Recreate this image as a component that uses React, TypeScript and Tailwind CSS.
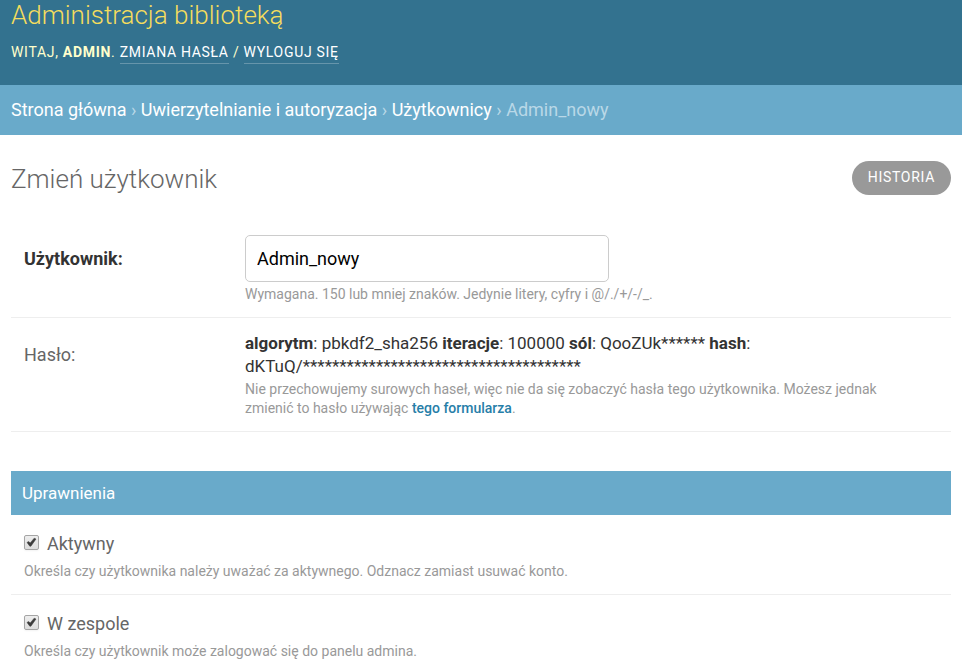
import { useState } from "react";

const linkClass = "border-b border-white/25 pb-[3px] text-white hover:border-transparent";

type CheckRowProps = { id: string; label: string; help: string };

function CheckRow({ id, label, help }: CheckRowProps) {
  const [checked, setChecked] = useState(true);
  return (
    <div className="border-b border-[#eee] px-[13px] pt-[15px] pb-[13px]">
      <div className="flex items-center gap-2">
        <span className="relative mb-[3px] flex h-[15px] w-[15px]">
          <input
            id={id}
            type="checkbox"
            checked={checked}
            onChange={(e) => setChecked(e.target.checked)}
            aria-describedby={id + "-help"}
            className="peer h-[15px] w-[15px] appearance-none rounded-[2px] border border-[#a5a5a5] bg-linear-to-b from-[#eee] to-[#ddd] shadow-xs"
          />
          <svg
            viewBox="0 0 15 15"
            className="pointer-events-none absolute inset-0 hidden h-[15px] w-[15px] peer-checked:block"
            aria-hidden="true"
          >
            <path d="M3 7.4 L4.8 6.6 L6.2 8 L10.2 3.2 L12 4 L6.9 11.2 L5.8 11.2 Z" fill="#3c3c3c" stroke="#3c3c3c" strokeWidth="0.5" />
          </svg>
        </span>
        <label htmlFor={id} className="text-[18px] leading-7 text-[#666]">
          {label}
        </label>
      </div>
      <p id={id + "-help"} className="mt-[3px] text-[14px] leading-5 text-[#999]">
        {help}
      </p>
    </div>
  );
}

export default function App() {
  const [name, setName] = useState("Admin_nowy");
  return (
    <div className="bg-white font-[Roboto,sans-serif] text-[#333]">
      <header className="bg-[#33728f] px-[11px] pb-[22px] text-[#ffc]">
        <h1 className="text-[26px] leading-[30px] font-light text-[#f5dd5d]">Administracja biblioteką</h1>
        <div className="mt-[11px] text-[14px] leading-[22px] tracking-wider uppercase">
          Witaj, <strong className="font-bold">admin</strong>.{" "}
          <a href="#password" className={linkClass}>Zmiana hasła</a> /{" "}
          <a href="#logout" className={linkClass}>Wyloguj się</a>
        </div>
      </header>
      <nav aria-label="Breadcrumb" className="bg-[#69aaca] px-[11px] py-[10px] text-[18px] leading-[30px] text-[#b9d8e7]">
        <a href="#home" className="text-white">Strona główna</a> ›{" "}
        <a href="#auth" className="text-white">Uwierzytelnianie i autoryzacja</a> ›{" "}
        <a href="#users" className="text-white">Użytkownicy</a> › Admin_nowy
      </nav>
      <main className="px-[11px] pt-[26px]">
        <div className="flex items-start justify-between">
          <h2 className="text-[26px] leading-9 font-light text-[#666]">Zmień użytkownik</h2>
          <button type="button" className="h-[34px] rounded-full bg-[#999] px-4 pb-[2px] text-[14px] leading-8 tracking-wider text-white uppercase">
            Historia
          </button>
        </div>
        <form onSubmit={(e) => e.preventDefault()}>
          <div className="mt-[38px] flex border-b border-[#eee] px-[13px] pb-[13px]">
            <label htmlFor="username" className="w-[221px] shrink-0 pt-3 text-[18px] leading-6 font-bold">
              Użytkownik:
            </label>
            <div className="flex-1">
              <input
                id="username"
                value={name}
                onChange={(e) => setName(e.target.value)}
                aria-describedby="username-help"
                className="block h-[47px] w-full max-w-[364px] rounded-[5px] border border-[#ccc] bg-white px-[11px] text-[18px] text-black"
              />
              <p id="username-help" className="mt-[2px] text-[14px] leading-5 text-[#999]">
                Wymagana. 150 lub mniej znaków. Jedynie litery, cyfry i @/./+/-/_.
              </p>
            </div>
          </div>
          <div className="flex border-b border-[#eee] px-[13px] pt-[14px] pb-[13px]">
            <div className="w-[221px] shrink-0 pt-[11px] text-[18px] leading-6 text-[#666]">Hasło:</div>
            <div className="min-w-0 flex-1">
              <p className="max-w-[580px] text-[17px] leading-[23px]">
                <strong>algorytm</strong>: pbkdf2_sha256 <strong>iteracje</strong>: 100000 <strong>sól</strong>: QooZUk******{" "}
                <strong>hash</strong>: dKTuQ/**************************************
              </p>
              <p className="mt-[2px] max-w-[660px] text-[14px] leading-[19px] text-[#999]">
                Nie przechowujemy surowych haseł, więc nie da się zobaczyć hasła tego użytkownika. Możesz jednak zmienić to hasło używając{" "}
                <a href="#form" className="font-medium text-[#267ea8]">tego formularza</a>.
              </p>
            </div>
          </div>
          <fieldset className="mt-[39px] min-w-0">
            <legend className="block w-full bg-[#69aaca] px-[11px] text-[17px] leading-[44px] text-white">Uprawnienia</legend>
            <CheckRow id="active" label="Aktywny" help="Określa czy użytkownika należy uważać za aktywnego. Odznacz zamiast usuwać konto." />
            <CheckRow id="staff" label="W zespole" help="Określa czy użytkownik może zalogować się do panelu admina." />
          </fieldset>
        </form>
      </main>
    </div>
  );
}
